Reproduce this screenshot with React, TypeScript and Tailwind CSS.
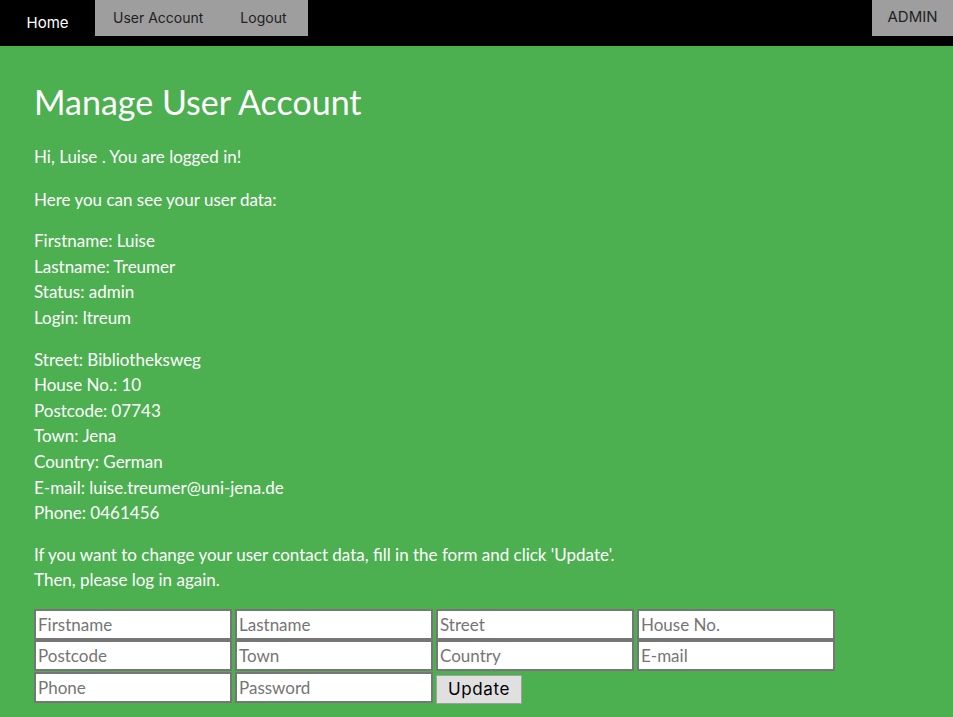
const fields = [
  "Firstname",
  "Lastname",
  "Street",
  "House No.",
  "Postcode",
  "Town",
  "Country",
  "E-mail",
  "Phone",
  "Password",
];

export default function App() {
  return (
    <div className="min-h-[717px] bg-[#4caf50] font-['Lato',sans-serif] text-white">
      <nav className="flex h-[46px] items-start bg-black font-['Inter',sans-serif] text-[14px]">
        <a className="flex h-[46px] w-[95px] items-center justify-center text-[15px] text-white">Home</a>
        <div className="flex h-[36px] w-[213px] items-center bg-[#9e9e9e] pb-[1px] text-[#222]">
          <a className="pl-[18px] pr-[37px]">User Account</a>
          <a>Logout</a>
        </div>
        <div className="ml-auto flex h-[36px] w-[81px] items-center justify-center bg-[#9e9e9e] pb-[1px] text-[15px] text-[#222]">
          ADMIN
        </div>
      </nav>

      <main className="px-[34px] pt-[34px] text-[17px] leading-[25.6px]">
        <h1 className="mb-[20px] text-[34px] leading-[44px]">Manage User Account</h1>
        <p className="mb-[17px]">Hi, Luise . You are logged in!</p>
        <p className="mb-[16px]">Here you can see your user data:</p>
        <p className="mb-[16px]">
          Firstname: Luise
          <br />
          Lastname: Treumer
          <br />
          Status: admin
          <br />
          Login: ltreum
        </p>
        <p className="mb-[16px]">
          Street: Bibliotheksweg
          <br />
          House No.: 10
          <br />
          Postcode: 07743
          <br />
          Town: Jena
          <br />
          Country: German
          <br />
          E-mail: luise.treumer@uni-jena.de
          <br />
          Phone: 0461456
        </p>
        <p className="mb-[16px]">
          If you want to change your user contact data, fill in the form and click 'Update'.
          <br />
          Then, please log in again.
        </p>
        <form className="grid w-fit grid-cols-[198px_198px_198px_198px] gap-x-[3px] gap-y-[0.5px]">
          {fields.map((f) => (
            <input
              key={f}
              type={f === "Password" ? "password" : "text"}
              placeholder={f}
              className="h-[31px] border-2 border-[#767676] bg-white px-[2px] text-[17px] text-black placeholder:text-[#757575]"
            />
          ))}
          <div className="pt-[3px]">
            <button
              type="button"
              className="h-[29px] w-[86px] border border-[#a0a0a0] bg-[#e0e0e0] font-['Inter',sans-serif] text-[17px] tracking-[0.6px] text-black"
            >
              Update
            </button>
          </div>
        </form>
      </main>
    </div>
  );
}
